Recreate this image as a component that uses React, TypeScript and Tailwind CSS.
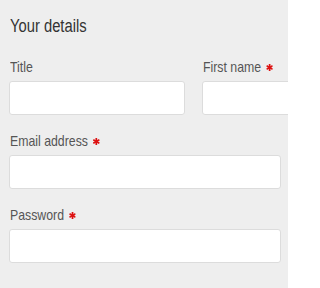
import React from "react";

const font = { fontFamily: '"Liberation Sans Narrow", "Arial Narrow", "Liberation Sans", Arial, sans-serif' };

function Req() {
  return (
    <svg width="8.5" height="7" viewBox="0 0 14 14" preserveAspectRatio="none" className="inline-block ml-[6px] align-[1px]">
      <g stroke="#d11" strokeWidth="3.4" strokeLinecap="butt">
        <line x1="7" y1="0" x2="7" y2="14" />
        <line x1="0.9" y1="3.5" x2="13.1" y2="10.5" />
        <line x1="0.9" y1="10.5" x2="13.1" y2="3.5" />
      </g>
    </svg>
  );
}

function Field({ label, required, className = "" }: { label: string; required?: boolean; className?: string }) {
  return (
    <div className={className}>
      <div className="text-[15px] leading-[20px] text-[#555] mb-[4px] whitespace-nowrap pl-[1px]">
        <span className="inline-block origin-left scale-x-[0.82]">
          {label}
          {required && <Req />}
        </span>
      </div>
      <div className="h-[34px] bg-white border border-[#dcdcdc] rounded-[3px]" />
    </div>
  );
}

export default function App() {
  return (
    <div className="w-[288px] h-[288px] overflow-hidden bg-[#eeeeee]" style={font}>
      <div className="pl-[9px] pr-[7px] pt-[16px]">
        <div className="text-[18px] leading-[20px] text-[#333] mb-[21px] pl-[1px] whitespace-nowrap">
          <span className="inline-block origin-left scale-x-[0.82]">Your details</span>
        </div>
        <div className="overflow-hidden -mr-[7px]">
          <div className="grid grid-cols-[176px_176px] gap-x-[17px]">
            <Field label="Title" />
            <Field label="First name" required />
          </div>
        </div>
        <Field label="Email address" required className="mt-[16px]" />
        <Field label="Password" required className="mt-[16px]" />
      </div>
    </div>
  );
}
